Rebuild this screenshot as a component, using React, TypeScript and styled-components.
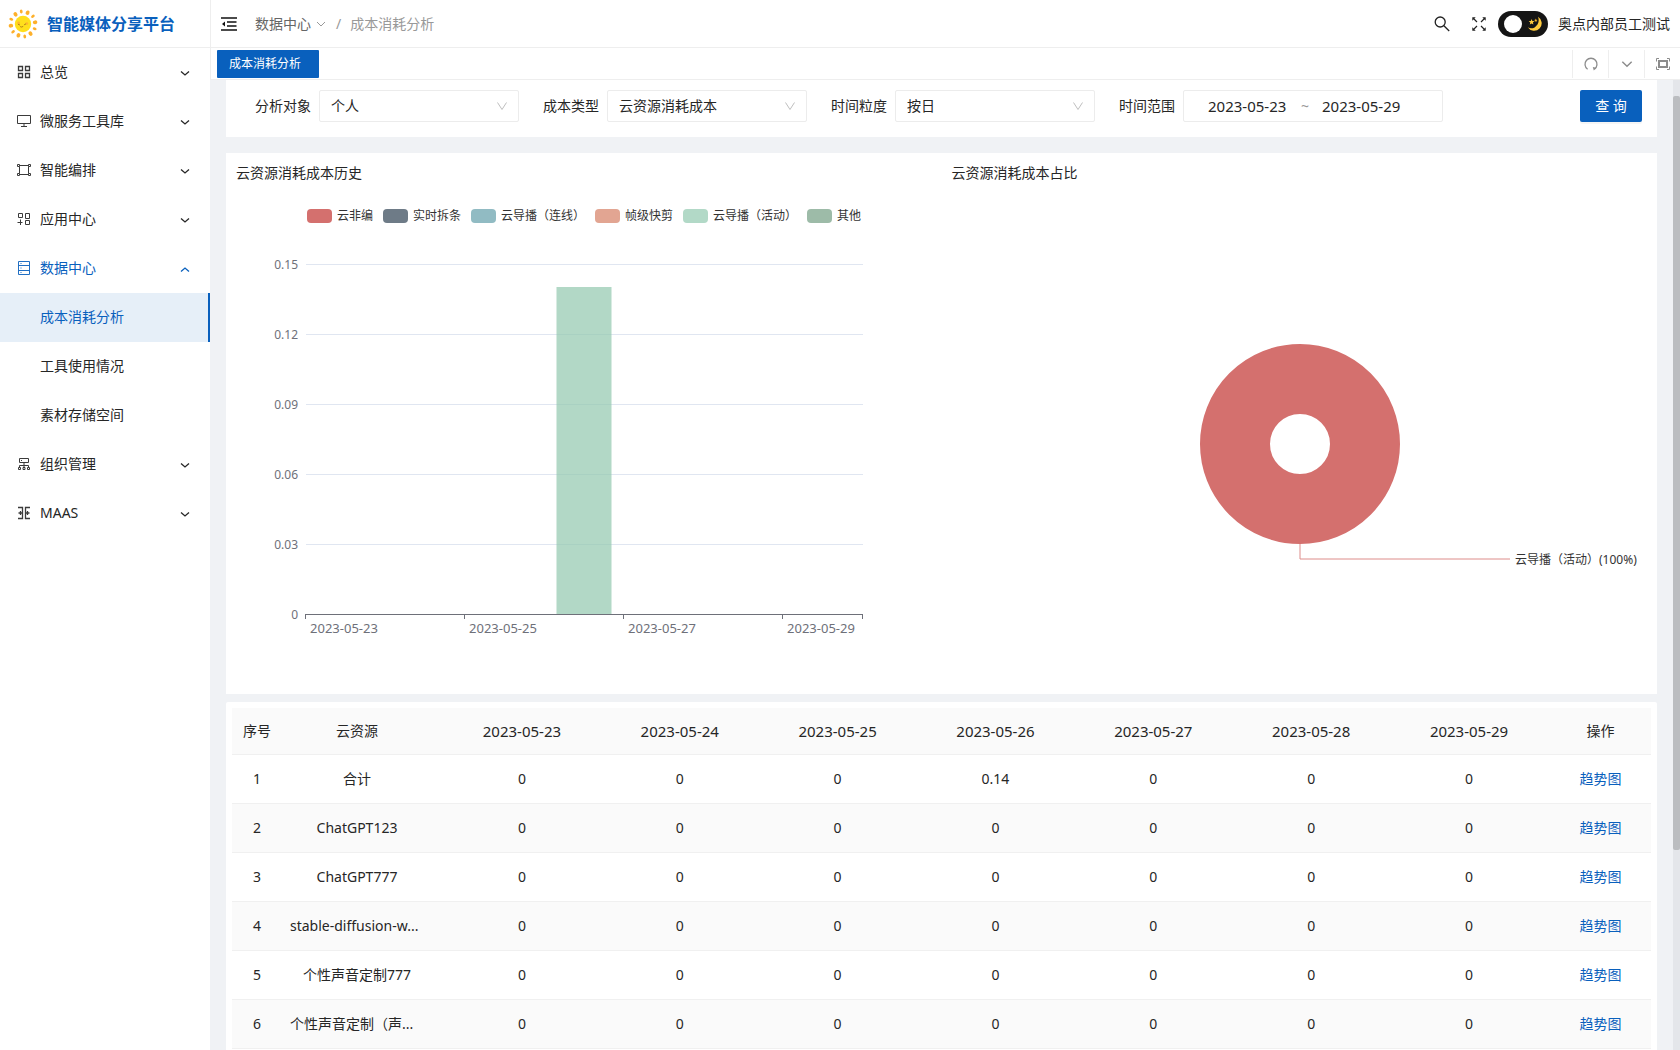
import React from "react";
import styled, { createGlobalStyle } from "styled-components";

const PRIMARY = "#0960bd";
const TEXT = "#262626";
const LINE = "#eeeeee";

const GlobalStyle = createGlobalStyle`
  *, *::before, *::after { box-sizing: border-box; }
  body {
    margin: 0;
    color: ${TEXT};
    background: #f0f2f5;
    font-family: "Noto Sans", "Noto Sans CJK SC", sans-serif;
    font-size: 14px;
    line-height: 22px;
  }
  button, input, select { font: inherit; color: inherit; }
  a { color: inherit; text-decoration: none; }
  svg { display: block; flex: none; }
`;

const Layout = styled.div`
  display: flex;
  height: 100vh;
  overflow: hidden;
`;

/* ---------- sidebar ---------- */

const Sidebar = styled.aside`
  flex: none;
  width: 210px;
  background: #fff;
`;

const Brand = styled.div`
  display: flex;
  align-items: center;
  gap: 9px;
  height: 48px;
  padding-left: 8px;
  border-bottom: 1px solid ${LINE};
  color: ${PRIMARY};
  font-size: 16px;
  font-weight: 700;
  white-space: nowrap;
`;

const MenuList = styled.ul`
  margin: 0;
  padding: 0;
  list-style: none;
`;

const MenuButton = styled.button<{ $open?: boolean }>`
  display: flex;
  align-items: center;
  gap: 8px;
  width: 100%;
  height: 49px;
  padding: 0 19px 2px 16px;
  border: 0;
  background: transparent;
  color: ${(p) => (p.$open ? PRIMARY : TEXT)};
  text-align: left;
  cursor: pointer;
`;

const MenuLabel = styled.span`
  flex: 1;
`;

const SubLink = styled.a<{ $active?: boolean }>`
  display: flex;
  align-items: center;
  height: 49px;
  padding: 0 0 2px 40px;
  border-right: 2px solid ${(p) => (p.$active ? PRIMARY : "transparent")};
  background: ${(p) => (p.$active ? "#e6eff8" : "transparent")};
  color: ${(p) => (p.$active ? PRIMARY : TEXT)};
`;

/* ---------- top bars ---------- */

const Main = styled.div`
  display: flex;
  flex: 1;
  flex-direction: column;
  min-width: 0;
`;

const Header = styled.header`
  display: flex;
  flex: none;
  align-items: center;
  justify-content: space-between;
  height: 48px;
  padding: 0 10px;
  border-bottom: 1px solid ${LINE};
  border-left: 1px solid ${LINE};
  background: #fff;
`;

const HeaderGroup = styled.div<{ $gap: number }>`
  display: flex;
  align-items: center;
  gap: ${(p) => p.$gap}px;
`;

const IconButton = styled.button`
  display: flex;
  align-items: center;
  justify-content: center;
  padding: 0;
  border: 0;
  background: transparent;
  cursor: pointer;
`;

const Crumbs = styled.nav`
  display: flex;
  align-items: center;
  gap: 9px;
  color: #999;
`;

const CrumbLink = styled.a`
  display: flex;
  align-items: center;
  gap: 4px;
  color: #666;
`;

const ThemeSwitch = styled.button`
  display: flex;
  align-items: center;
  justify-content: space-between;
  width: 50px;
  height: 26px;
  margin-left: -10px;
  padding: 0 5px 0 6px;
  border: 0;
  border-radius: 13px;
  background: #151515;
  cursor: pointer;
`;

const Knob = styled.span`
  width: 18px;
  height: 18px;
  border-radius: 50%;
  background: #fff;
`;

const UserName = styled.span`
  margin-left: -12px;
`;

const TabBar = styled.div`
  display: flex;
  flex: none;
  align-items: center;
  justify-content: space-between;
  height: 32px;
  padding-left: 6px;
  border-bottom: 1px solid ${LINE};
  border-left: 1px solid ${LINE};
  background: #fff;
`;

const Tab = styled.button`
  width: 102px;
  height: 28px;
  padding: 0 0 0 12px;
  border: 0;
  border-radius: 1px;
  background: ${PRIMARY};
  color: #fff;
  font-size: 12px;
  line-height: 26px;
  text-align: left;
  cursor: pointer;
`;

const TabTools = styled.div`
  display: flex;
`;

const TabTool = styled(IconButton)`
  width: 36px;
  height: 28px;
  border-left: 1px solid ${LINE};
`;

/* ---------- content ---------- */

const Scroller = styled.div`
  display: flex;
  flex: 1;
  min-height: 0;
`;

const Content = styled.main`
  flex: 1;
  min-width: 0;
  padding: 0 16px;
  overflow: hidden;
`;

const ScrollTrack = styled.div`
  flex: none;
  width: 7px;
  padding-top: 16px;
  background: #e4e6ea;
`;

const ScrollThumb = styled.div`
  height: 79%;
  border-radius: 2px;
  background: #bbbdc0;
`;

const FilterCard = styled.form`
  display: flex;
  align-items: flex-start;
  justify-content: space-between;
  margin-bottom: 16px;
  padding: 10px 15px 15px 29px;
  background: #fff;
`;

const Filters = styled.div`
  display: flex;
  gap: 24px;
`;

const Field = styled.div`
  display: flex;
  align-items: center;
  gap: 8px;
  white-space: nowrap;
`;

const SelectBox = styled.div`
  display: grid;
  align-items: center;
  width: 200px;
  height: 32px;
  > * { grid-area: 1 / 1; }
  > svg {
    justify-self: end;
    margin-right: 11px;
    pointer-events: none;
  }
`;

const Select = styled.select`
  width: 100%;
  height: 32px;
  padding: 0 30px 0 11px;
  border: 1px solid #ececec;
  border-radius: 2px;
  outline: 0;
  background: #fff;
  appearance: none;
`;

const RangeBox = styled.div`
  display: flex;
  align-items: center;
  gap: 13px;
  width: 260px;
  height: 32px;
  padding-left: 24px;
  border: 1px solid #ececec;
  border-radius: 2px;
  color: #999;
`;

const DateInput = styled.input`
  width: 80px;
  padding: 0;
  border: 0;
  outline: 0;
  background: transparent;
  color: ${TEXT};
  font-size: 15px;
`;

const QueryButton = styled.button`
  width: 62px;
  height: 32px;
  padding: 0;
  border: 0;
  border-radius: 2px;
  background: ${PRIMARY};
  color: #fff;
  box-shadow: 0 2px 0 rgba(0, 0, 0, 0.04);
  cursor: pointer;
`;

const ChartCard = styled.section`
  display: grid;
  grid-template-columns: 1fr 1fr;
  height: 541px;
  margin-bottom: 8px;
  background: #fff;
`;

const ChartPane = styled.div`
  min-width: 0;
  padding-top: 9px;
`;

const ChartTitle = styled.h2`
  margin: 0 0 25px;
  padding-left: 10px;
  font-size: 14px;
  font-weight: 400;
  line-height: 22px;
`;

const Legend = styled.ul`
  display: flex;
  align-items: center;
  gap: 10px;
  height: 14px;
  margin: 0;
  padding: 0 0 0 81px;
  list-style: none;
`;

const LegendItem = styled.li`
  display: flex;
  align-items: center;
  gap: 5px;
  color: #333;
  font-size: 12px;
  line-height: 14px;
  white-space: nowrap;
`;

const Swatch = styled.span<{ $color: string }>`
  width: 25px;
  height: 14px;
  border-radius: 4px;
  background: ${(p) => p.$color};
`;

const AxisText = styled.text`
  fill: #6e7079;
  font-size: 12px;
`;

const AxisDate = styled(AxisText)`
  font-size: 13px;
`;

const PieText = styled.text`
  fill: #333;
  font-size: 12px;
`;

const PieChart = styled.svg`
  overflow: visible;
`;

const TableCard = styled.section`
  padding: 6px;
  border-radius: 2px;
  background: #fff;
`;

const Table = styled.table`
  width: 100%;
  border-collapse: separate;
  border-spacing: 0;
  table-layout: fixed;
  text-align: center;
`;

const HeadRow = styled.tr`
  height: 47px;
  background: #fafafa;
`;

const BodyRow = styled.tr`
  height: 49px;
  &:nth-child(even) { background: #fafafa; }
`;

const HeadCell = styled.th<{ $kind?: "index" | "name" | "action" }>`
  width: ${(p) =>
    p.$kind === "index" ? "50px" : p.$kind === "name" ? "161px" : p.$kind === "action" ? "103px" : "auto"};
  padding: 0;
  padding-right: ${(p) => (p.$kind === "name" ? "11px" : "0")};
  padding-left: ${(p) => (p.$kind === "action" ? "2px" : "0")};
  border-bottom: 1px solid #f0f0f0;
  font-size: ${(p) => (p.$kind ? "14px" : "15px")};
  font-weight: 400;
`;

const Cell = styled.td<{ $kind?: "name" | "action"; $clipped?: boolean }>`
  padding: 0;
  padding-right: ${(p) => (p.$kind === "name" ? "11px" : "0")};
  padding-left: ${(p) => (p.$clipped ? "8px" : p.$kind === "action" ? "2px" : "0")};
  border-bottom: 1px solid #f0f0f0;
  text-align: ${(p) => (p.$clipped ? "left" : "center")};
  white-space: nowrap;
`;

const TrendLink = styled.a`
  color: ${PRIMARY};
`;

/* ---------- icons ---------- */

const Chevron = ({ size, color, up, deep, width = 1 }: { size: number; color: string; up?: boolean; deep?: boolean; width?: number }) => (
  <svg width={size} height={size} viewBox="0 0 12 12" fill="none" stroke={color} strokeWidth={width}>
    <path d={up ? "M2 8l4-4 4 4" : deep ? "M1.5 2.5L6 9.5l4.5-7" : "M2 4l4 4 4-4"} />
  </svg>
);

const MenuChevron = ({ up }: { up: boolean }) => (
  <svg width="12" height="12" viewBox="0 0 12 12" fill="none" stroke="currentColor" strokeWidth="1.3">
    <path d={up ? "M2 9.500l4-3.500 4 3.500" : "M2 5.500l4 3.500 4-3.500"} />
  </svg>
);

const SunLogo = () => (
  <svg width="30" height="30" viewBox="0 0 30 30">
    <g fill="#fdb02b">
      {Array.from({ length: 12 }, (_, i) => (
        <ellipse
          key={i}
          cx="15"
          cy={i % 2 ? 2.8 : 2.4}
          rx={i % 2 ? 1.9 : 1.4}
          ry={i % 2 ? 2.3 : 2}
          transform={`rotate(${i * 30 - 8} 15 15)`}
        />
      ))}
    </g>
    <circle cx="15" cy="15" r="8.2" fill="#ffdf1c" />
    <circle cx="10.6" cy="14" r="1.4" fill="#ffb52e" />
    <circle cx="18.8" cy="14.6" r="1.4" fill="#ffb52e" />
    <g fill="none" stroke="#a8741a" strokeWidth=".9" strokeLinecap="round">
      <path d="M10.400 15.400l1.200.5M16.500 15.600l1.200-.6M12.500 17.800q1.200.8 2.400-.2" />
    </g>
  </svg>
);

const menuIcons: Record<string, React.ReactNode> = {
  grid: <path d="M2.5 1.500h4v4h-4zM9.500 1.500h4v4h-4zM2.500 8.500h4v4h-4zM9.500 8.500h4v4h-4z" strokeWidth="1.3" />,
  monitor: <path d="M1.500 1.500h13v8h-13zM8 9.500v3M5 12.500h6" />,
  flow: (
    <>
      <path d="M3.500 3.500v7M12.500 3.500v7M4 2.500h8M4 11.500h8" />
      <path d="M1.500 1.500h2v2h-2zM12.500 1.500h2v2h-2zM1.500 10.500h2v2h-2zM12.500 10.500h2v2h-2z" />
    </>
  ),
  apps: <path d="M2.500 1.500h4v4h-4zM9.500 1.500h4v5h-4zM9.500 8.500h4v4h-4zM4.500 7.500v5.500M1.500 10.500h5" />,
  server: (
    <>
      <path d="M2.500.5h11v13h-11zM2.500 4.500h11M2.500 9.500h11" />
      <path d="M4.500 2.500h1M4.500 7h1M4.500 11.500h1" />
    </>
  ),
  org: <path d="M3.500 1.500h9v4h-9zM5 3.500h1M8 5.500v3M3.500 10.500v-2h9v2M2.500 10.500h2v2h-2zM7 10.500h2v2H7zM11.500 10.500h2v2h-2zM8 8.500v2" />,
  maas: <path d="M2 1.500h4.500v11H2M2.500 7h4M4.500 5v4M14 1.500H9.500v11H14M9.500 7h4M11.500 5v4" strokeWidth="1.3" />,
};

const MenuIcon = ({ name }: { name: string }) => (
  <svg width="16" height="14" viewBox="0 0 16 14" fill="none" stroke="currentColor" strokeWidth="1" opacity=".9">
    {menuIcons[name]}
  </svg>
);

const FoldIcon = () => (
  <svg width="16" height="14" viewBox="0 0 16 14" fill="none" stroke="#111" strokeWidth="1.3">
    <path d="M0 1h16M6 5h9.500M6 9h9.500M0 13h16" />
    <path d="M4 4.600v4.800L1 7z" fill="#111" stroke="none" />
  </svg>
);

const SearchIcon = () => (
  <svg width="16" height="16" viewBox="0 0 16 16" fill="none" stroke="#222" strokeWidth="1.3">
    <circle cx="6.200" cy="6" r="5" />
    <path d="M9.900 9.700l5.300 5.300" />
  </svg>
);

const ExpandIcon = () => (
  <svg width="14" height="14" viewBox="0 0 14 14" fill="none" stroke="#222" strokeWidth="1.2">
    <path d="M1.500 1.500L5 5M12.500 1.500L9 5M1.500 12.500L5 9M12.500 12.500L9 9" />
    <path d="M.3.3h3.400L.3 3.700zM13.700.3h-3.400l3.400 3.400zM.3 13.700h3.400L.3 10.300zM13.700 13.700h-3.400l3.400-3.400z" fill="#222" stroke="none" />
  </svg>
);

const MoonIcon = () => (
  <svg width="16" height="16" viewBox="0 0 16 16">
    <path d="M11 .8a7.500 7.500 0 1 1-10.200 10.400Q4 13.400 7.600 11.400C11.400 9 12.600 5 11 .8z" fill="#ffcb3d" />
    <path d="M4.600 3l.8 1.900 2.100.2-1.600 1.400.5 2-1.800-1-1.800 1 .5-2L1.700 5.100l2.100-.2z" fill="#ffcb3d" />
    <path d="M8.800 2.600l.5 1.100 1.100.2-.8.800.2 1.100-1-.5-1 .5.200-1.100-.8-.8 1.100-.2z" fill="#f5b52a" />
  </svg>
);

const ReloadIcon = () => (
  <svg width="14" height="14" viewBox="0 0 14 14" fill="none" stroke="#8c8c8c" strokeWidth="1.3">
    <path d="M3.600 12.200A6 6 0 1 1 10.400 12.200" />
    <path d="M8.800 10l3.400.8-2.400 2.800z" fill="#8c8c8c" stroke="none" />
  </svg>
);

const FrameIcon = () => (
  <svg width="14" height="14" viewBox="0 0 14 14" fill="none" stroke="#8c8c8c">
    <path d="M.5 4.500V1.500H3M11 1.500h2.500V4.500M13.500 9.500v3H11M3 12.500H.5V9.500" />
    <path d="M3 4h8v6H3z" strokeWidth="2" />
  </svg>
);

/* ---------- data ---------- */

const menu = [
  { icon: "grid", label: "总览" },
  { icon: "monitor", label: "微服务工具库" },
  { icon: "flow", label: "智能编排" },
  { icon: "apps", label: "应用中心" },
  { icon: "server", label: "数据中心", children: ["成本消耗分析", "工具使用情况", "素材存储空间"] },
  { icon: "org", label: "组织管理" },
  { icon: "maas", label: "MAAS" },
];

const selects = [
  { id: "target", label: "分析对象", value: "个人" },
  { id: "cost-type", label: "成本类型", value: "云资源消耗成本" },
  { id: "granularity", label: "时间粒度", value: "按日" },
];

const legend = [
  { label: "云非编", color: "#d4706e" },
  { label: "实时拆条", color: "#6e7b87" },
  { label: "云导播（连线）", color: "#91bbc3" },
  { label: "帧级快剪", color: "#e2a592" },
  { label: "云导播（活动）", color: "#b2d9c7" },
  { label: "其他", color: "#9dbba8" },
];

const dates = ["2023-05-23", "2023-05-24", "2023-05-25", "2023-05-26", "2023-05-27", "2023-05-28", "2023-05-29"];
const none = ["0", "0", "0", "0", "0", "0", "0"];

const rows = [
  { name: "合计", values: ["0", "0", "0", "0.14", "0", "0", "0"] },
  { name: "ChatGPT123", values: none },
  { name: "ChatGPT777", values: none },
  { name: "stable-diffusion-w...", values: none, clipped: true },
  { name: "个性声音定制777", values: none },
  { name: "个性声音定制（声...", values: none, clipped: true },
];

/* ---------- charts ---------- */

const PLOT = { left: 80, right: 637, top: 41, bottom: 391 };
const STEP = (PLOT.right - PLOT.left) / dates.length;

const CostHistory = () => (
  <svg width="680" height="440" role="img" aria-label="云资源消耗成本历史">
    {["0.15", "0.12", "0.09", "0.06", "0.03", "0"].map((tick, i) => {
      const y = PLOT.top + i * 70;
      return (
        <g key={tick}>
          <AxisText x={PLOT.left - 8} y={y + 5} textAnchor="end">{tick}</AxisText>
          {tick !== "0" && (
            <path d={`M${PLOT.left} ${y + 0.5}H${PLOT.right}`} stroke="#e0e6f1" />
          )}
        </g>
      );
    })}
    <rect x={330.5} y={64} width={55} height={PLOT.bottom - 64} fill="#91c7ae" fillOpacity=".7" />
    <path d={`M${PLOT.left} ${PLOT.bottom + 0.5}H${PLOT.right}`} stroke="#6e7079" />
    {[0, 2, 4, 6, 7].map((n) => (
      <path key={n} d={`M${Math.round(PLOT.left + n * STEP) - 0.5} ${PLOT.bottom}v5`} stroke="#6e7079" />
    ))}
    {[0, 2, 4, 6].map((n) => (
      <AxisDate key={n} x={Math.round(PLOT.left + (n + 0.5) * STEP) - 2} y={PLOT.bottom + 19} textAnchor="middle">
        {dates[n]}
      </AxisDate>
    ))}
  </svg>
);

const CostShare = () => (
  <PieChart width="100%" height="440" role="img" aria-label="云资源消耗成本占比">
    <circle cx="358" cy="235" r="65" fill="none" stroke="#d4706e" strokeWidth="70" />
    <path d="M358 335v15h210" fill="none" stroke="#dd8c8a" strokeWidth="1" />
    <PieText x="573" y="355">云导播（活动）(100%)</PieText>
  </PieChart>
);

export default function App() {
  return (
    <>
      <GlobalStyle />
      <Layout>
        <Sidebar>
          <Brand>
            <SunLogo />
            智能媒体分享平台
          </Brand>
          <MenuList>
            {menu.map((item) => (
              <li key={item.label}>
                <MenuButton type="button" $open={!!item.children} aria-expanded={!!item.children}>
                  <MenuIcon name={item.icon} />
                  <MenuLabel>{item.label}</MenuLabel>
                  <MenuChevron up={!!item.children} />
                </MenuButton>
                {item.children && (
                  <MenuList>
                    {item.children.map((child, i) => (
                      <li key={child}>
                        <SubLink href="#" $active={i === 0}>{child}</SubLink>
                      </li>
                    ))}
                  </MenuList>
                )}
              </li>
            ))}
          </MenuList>
        </Sidebar>

        <Main>
          <Header>
            <HeaderGroup $gap={18}>
              <IconButton type="button" aria-label="折叠菜单"><FoldIcon /></IconButton>
              <Crumbs>
                <CrumbLink href="#">
                  数据中心
                  <Chevron size={12} color="#999" />
                </CrumbLink>
                <span>/</span>
                <span>成本消耗分析</span>
              </Crumbs>
            </HeaderGroup>
            <HeaderGroup $gap={22}>
              <IconButton type="button" aria-label="搜索"><SearchIcon /></IconButton>
              <IconButton type="button" aria-label="全屏"><ExpandIcon /></IconButton>
              <ThemeSwitch type="button" role="switch" aria-checked="false" aria-label="主题">
                <Knob />
                <MoonIcon />
              </ThemeSwitch>
              <UserName>奥点内部员工测试</UserName>
            </HeaderGroup>
          </Header>

          <TabBar>
            <Tab type="button">成本消耗分析</Tab>
            <TabTools>
              <TabTool type="button" aria-label="刷新"><ReloadIcon /></TabTool>
              <TabTool type="button" aria-label="更多"><Chevron size={14} color="#8c8c8c" width={1.2} /></TabTool>
              <TabTool type="button" aria-label="内容全屏"><FrameIcon /></TabTool>
            </TabTools>
          </TabBar>

          <Scroller>
            <Content>
              <FilterCard>
                <Filters>
                  {selects.map((s) => (
                    <Field key={s.id}>
                      <label htmlFor={s.id}>{s.label}</label>
                      <SelectBox>
                        <Select id={s.id} defaultValue={s.value}>
                          <option>{s.value}</option>
                        </Select>
                        <Chevron size={12} color="#bfbfbf" deep />
                      </SelectBox>
                    </Field>
                  ))}
                  <Field>
                    <label htmlFor="range-start">时间范围</label>
                    <RangeBox>
                      <DateInput id="range-start" defaultValue="2023-05-23" />
                      <span>~</span>
                      <DateInput aria-label="结束日期" defaultValue="2023-05-29" />
                    </RangeBox>
                  </Field>
                </Filters>
                <QueryButton type="button">查 询</QueryButton>
              </FilterCard>

              <ChartCard>
                <ChartPane>
                  <ChartTitle>云资源消耗成本历史</ChartTitle>
                  <Legend>
                    {legend.map((item) => (
                      <LegendItem key={item.label}>
                        <Swatch $color={item.color} />
                        {item.label}
                      </LegendItem>
                    ))}
                  </Legend>
                  <CostHistory />
                </ChartPane>
                <ChartPane>
                  <ChartTitle>云资源消耗成本占比</ChartTitle>
                  <CostShare />
                </ChartPane>
              </ChartCard>

              <TableCard>
                <Table>
                  <thead>
                    <HeadRow>
                      <HeadCell $kind="index">序号</HeadCell>
                      <HeadCell $kind="name">云资源</HeadCell>
                      {dates.map((d) => (
                        <HeadCell key={d}>{d}</HeadCell>
                      ))}
                      <HeadCell $kind="action">操作</HeadCell>
                    </HeadRow>
                  </thead>
                  <tbody>
                    {rows.map((row, i) => (
                      <BodyRow key={row.name}>
                        <Cell>{i + 1}</Cell>
                        <Cell $kind="name" $clipped={row.clipped}>{row.name}</Cell>
                        {row.values.map((v, n) => (
                          <Cell key={dates[n]}>{v}</Cell>
                        ))}
                        <Cell $kind="action"><TrendLink href="#">趋势图</TrendLink></Cell>
                      </BodyRow>
                    ))}
                  </tbody>
                </Table>
              </TableCard>
            </Content>
            <ScrollTrack><ScrollThumb /></ScrollTrack>
          </Scroller>
        </Main>
      </Layout>
    </>
  );
}
